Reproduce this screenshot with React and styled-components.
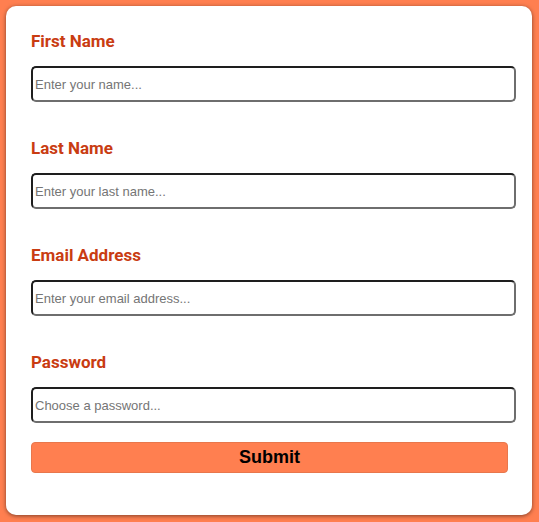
import React from "react";
import styled, { createGlobalStyle } from "styled-components";

const GlobalStyle = createGlobalStyle`
  html, body {
    margin: 0;
    padding: 0;
    background-color: #ff7f50;
  }
`;

const Page = styled.div`
  padding: 6px 7px 7px 6px;
  min-height: 522px;
  box-sizing: border-box;
`;

const StyledCard = styled.form`
  background-color: #fff;
  border-radius: 10px;
  box-shadow: 0 1px 4px rgba(0, 0, 0, 0.5);
  padding: 25px 24px 42px 25px;
  height: 509px;
  box-sizing: border-box;
`;

const StyledField = styled.div`
  margin-bottom: ${(props) => (props.last ? "19px" : "36px")};
`;

const StyledLabel = styled.label`
  display: block;
  color: #c93c12;
  font-family: Roboto, "DejaVu Sans", sans-serif;
  font-weight: bold;
  font-size: 17px;
  line-height: 20px;
  margin-bottom: 15px;
`;

const StyledInput = styled.input`
  display: block;
  width: 100%;
  box-sizing: content-box;
  padding: 0 2px;
  height: 32px;
  border: 2px solid;
  border-color: #1e1e1e #6e6e6e #6e6e6e #1e1e1e;
  border-radius: 5px;
  font-family: "Liberation Sans", Arial, sans-serif;
  font-size: 13px;
  color: #333;
  outline: none;

  &::placeholder {
    color: #757575;
  }
`;

const StyledButton = styled.button`
  display: block;
  width: 100%;
  height: 31px;
  background-color: #ff7f50;
  border: 1px solid #e8774c;
  border-radius: 4px;
  color: #000;
  font-family: "Liberation Sans", Arial, sans-serif;
  font-weight: bold;
  font-size: 18px;
  cursor: pointer;
`;

const fields = [
  { id: "first", label: "First Name", placeholder: "Enter your name...", type: "text" },
  { id: "last", label: "Last Name", placeholder: "Enter your last name...", type: "text" },
  { id: "email", label: "Email Address", placeholder: "Enter your email address...", type: "email" },
  { id: "password", label: "Password", placeholder: "Choose a password...", type: "password" },
];

export default function App() {
  return (
    <Page>
      <GlobalStyle />
      <StyledCard onSubmit={(e) => e.preventDefault()}>
        {fields.map((f, i) => (
          <StyledField key={f.id} last={i === fields.length - 1}>
            <StyledLabel htmlFor={f.id}>{f.label}</StyledLabel>
            <StyledInput id={f.id} type={f.type} placeholder={f.placeholder} />
          </StyledField>
        ))}
        <StyledButton type="submit">Submit</StyledButton>
      </StyledCard>
    </Page>
  );
}
